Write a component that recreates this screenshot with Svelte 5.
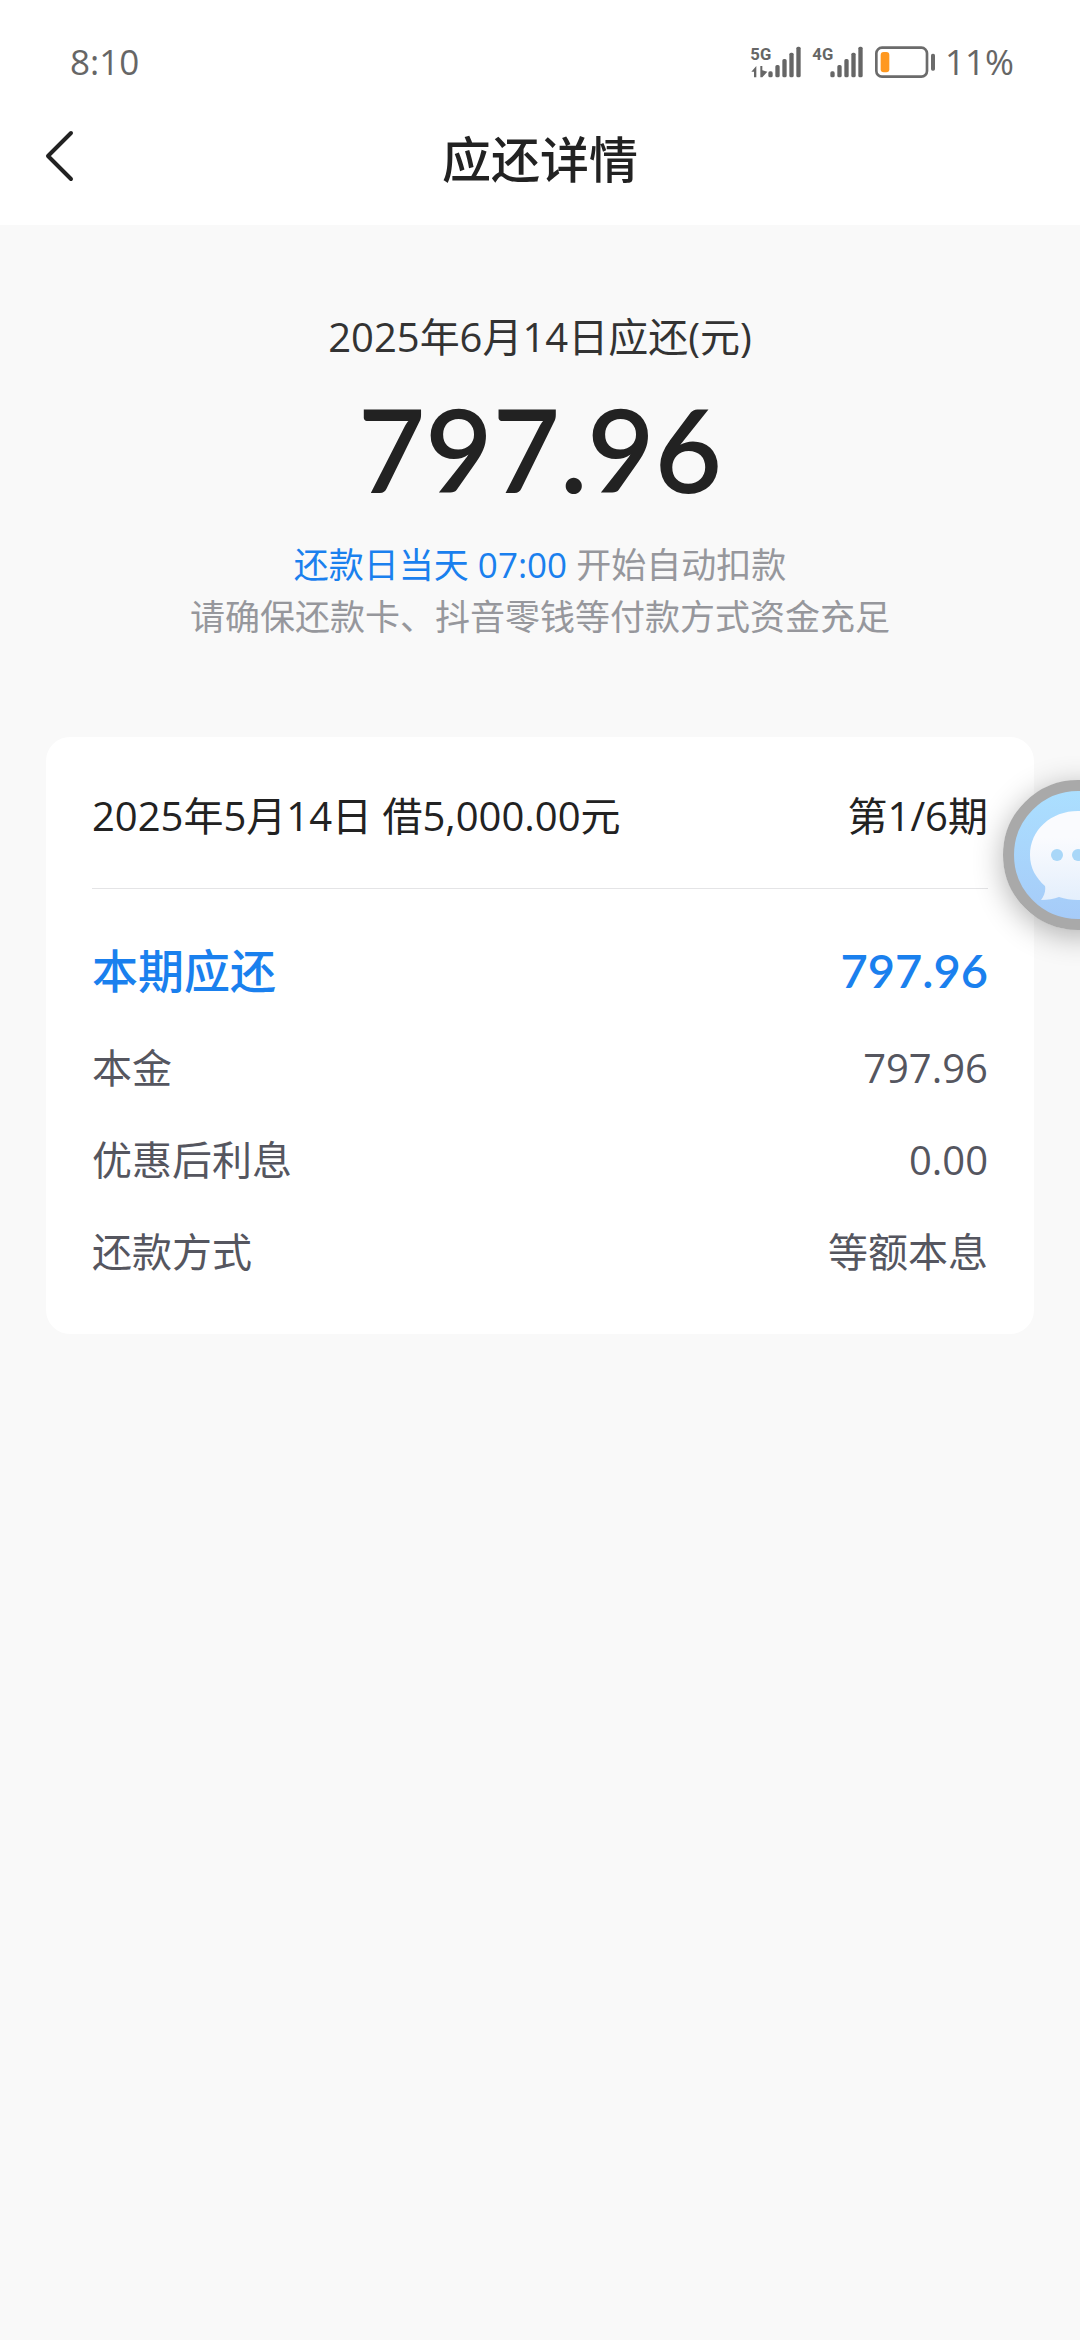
<script lang="ts">
  interface Row {
    label: string;
    value: string;
    primary?: boolean;
  }

  const rows: Row[] = [
    { label: '本期应还', value: '797.96', primary: true },
    { label: '本金', value: '797.96' },
    { label: '优惠后利息', value: '0.00' },
    { label: '还款方式', value: '等额本息' },
  ];

  // bar height per signal step
  const bars = [18, 37, 55, 74, 92];
</script>

{#snippet signal(name: string, data: boolean)}
  <svg class="signal" viewBox="0 0 150 96" role="img" aria-label={name}>
    <text x="-2" y="42">{name}</text>
    {#if data}
      <path d="M1 77 L16 60 V94 H9 V77 Z M28 60 H34 V73 L49 77 L34 94 H28 Z" />
    {/if}
    {#each bars as h, i (h)}
      <rect x={52 + i * 21} y={94 - h} width="13" height={h} rx="5" />
    {/each}
  </svg>
{/snippet}

<div class="page">
  <div class="status-bar">
    <span class="time">8:10</span>
    <div class="status-icons">
      {@render signal('5G', true)}
      {@render signal('4G', false)}
      <svg class="battery" viewBox="0 0 180 96" aria-hidden="true">
        <rect x="4" y="5" width="152" height="87" rx="17" fill="none" stroke="#6b6b6b" stroke-width="8" />
        <rect x="168" y="23" width="12" height="51" rx="5" fill="#6b6b6b" />
        <rect x="17" y="18" width="26" height="61" rx="9" fill="#ff981f" />
      </svg>
      <span class="percent">11%</span>
    </div>
  </div>

  <header class="nav">
    <button type="button" class="back" aria-label="返回">
      <svg viewBox="0 0 32 56" aria-hidden="true">
        <path d="M27 5 L4 28 L27 51" />
      </svg>
    </button>
    <h1>应还详情</h1>
  </header>

  <main>
    <section class="summary">
      <p class="due">2025年6月14日应还(元)</p>
      <p class="total">797.96</p>
      <p class="note"><span class="highlight">还款日当天 07:00</span> 开始自动扣款</p>
      <p class="note">请确保还款卡、抖音零钱等付款方式资金充足</p>
    </section>

    <section class="card">
      <div class="card-header">
        <span>2025年5月14日 借5,000.00元</span>
        <span>第1/6期</span>
      </div>
      <dl>
        {#each rows as row (row.label)}
          <div class="row" class:primary={row.primary}>
            <dt>{row.label}</dt>
            <dd>{row.value}</dd>
          </div>
        {/each}
      </dl>
    </section>
  </main>

  <button type="button" class="chat" aria-label="客服">
    <svg viewBox="0 0 128 128" aria-hidden="true">
      <defs>
        <linearGradient id="bubble" x1="0" y1="0" x2="0" y2="1">
          <stop offset="0.3" stop-color="#fafbfe" />
          <stop offset="1" stop-color="#e4effc" />
        </linearGradient>
      </defs>
      <path
        fill="url(#bubble)"
        d="M64 20 C37 20 16 39 16 64 C16 77 22 87 31 95 C32 100 30 105 27 109 C34 109 40 108 45 106 C51 108 57 109 64 109 C91 109 112 89 112 64 C112 39 91 20 64 20 Z"
      />
      <circle cx="43" cy="64" r="6" />
      <circle cx="64" cy="64" r="6" />
      <circle cx="85" cy="64" r="6" />
    </svg>
  </button>
</div>

<style>
  :global(body) {
    margin: 0;
    background: #f9f9f9;
  }

  .page {
    position: relative;
    min-height: 100vh;
    overflow: hidden;
    background: #f9f9f9;
    color: #222;
    font-family: 'Open Sans', 'Noto Sans CJK SC', sans-serif;
    font-size: 40px;
    line-height: 60px;
  }

  h1,
  p,
  dl,
  dd {
    margin: 0;
  }

  button {
    padding: 0;
    border: none;
    background: none;
    cursor: pointer;
  }

  .status-bar {
    display: flex;
    align-items: center;
    justify-content: space-between;
    padding: 32px 66px 0 70px;
    background: #fff;
    color: #666;
    font-size: 35px;
  }

  .status-icons {
    display: flex;
    align-items: center;
    gap: 10px;
  }

  .signal {
    width: 50px;
    height: 32px;
    fill: #666;
    overflow: visible;
  }

  .signal text {
    font-family: Roboto, 'Liberation Sans', sans-serif;
    font-size: 50px;
    font-weight: 700;
  }

  .signal + .signal {
    margin-left: 2px;
  }

  .battery {
    width: 60px;
    height: 32px;
    margin-left: 2px;
  }

  .nav {
    display: grid;
    grid-template-columns: 80px 1fr 80px;
    align-items: center;
    height: 133px;
    background: #fff;
  }

  .back {
    display: flex;
    align-items: center;
    justify-content: flex-end;
    height: 80px;
    padding-bottom: 6px;
  }

  .back svg {
    width: 32px;
    height: 56px;
    margin-right: 4px;
    fill: none;
    stroke: #222;
    stroke-width: 4;
    stroke-linecap: round;
    stroke-linejoin: round;
  }

  h1 {
    font-size: 49px;
    font-weight: 500;
    text-align: center;
  }

  main {
    padding: 82px 46px;
  }

  .summary {
    text-align: center;
  }

  .due {
    color: #333;
  }

  .total {
    margin: 18px 0 26px;
    font-family: Lato, 'Open Sans', sans-serif;
    font-size: 116px;
    font-weight: 600;
    line-height: 128px;
  }

  .note {
    color: #96979c;
    font-size: 35px;
    line-height: 52px;
  }

  .highlight {
    color: #1a80ee;
  }

  .card {
    margin-top: 94px;
    padding: 0 46px 52px;
    border-radius: 24px;
    background: #fff;
  }

  .card-header {
    display: flex;
    justify-content: space-between;
    padding: 49px 0 42px;
    border-bottom: 1px solid #e4e4e6;
  }

  dl {
    display: flex;
    flex-direction: column;
    gap: 32px;
    padding-top: 49px;
  }

  .row {
    display: flex;
    justify-content: space-between;
    color: #55565f;
  }

  .row.primary {
    padding-bottom: 4px;
    color: #1a80ee;
    font-size: 46px;
    font-weight: 500;
    line-height: 64px;
  }

  .row.primary dd {
    font-family: Lato, 'Open Sans', sans-serif;
    font-size: 47px;
    font-weight: 600;
  }

  .chat {
    position: absolute;
    top: 780px;
    right: -73px;
    display: flex;
    width: 150px;
    height: 150px;
    box-sizing: border-box;
    border: 11px solid #a9a9a9;
    border-radius: 50%;
    background: linear-gradient(#abdfff, #a6cbf8);
    box-shadow: 0 6px 30px rgba(0, 0, 0, 0.3);
  }

  .chat svg {
    width: 128px;
    height: 128px;
  }

  .chat circle {
    fill: #a9d7f8;
  }
</style>
